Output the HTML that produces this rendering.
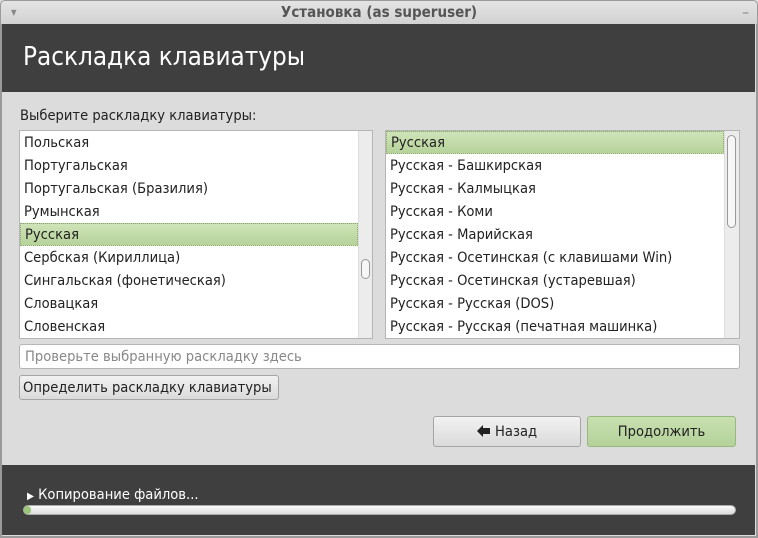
<!DOCTYPE html>
<html><head><meta charset="utf-8"><style>
*{box-sizing:border-box;margin:0;padding:0}
body{width:758px;height:538px;background:#dcdcdc;font-family:"DejaVu Sans Condensed","Liberation Sans",sans-serif;font-size:14.6px;color:#222;position:relative;overflow:hidden;white-space:nowrap}
.a{position:absolute}
.tb{left:0;top:0;width:758px;height:24px;background:linear-gradient(#e4e4e4,#d2d2d2);border:1px solid #9a9a9a;border-bottom:none;border-radius:5px 5px 0 0;text-align:center;font-weight:bold;color:#555;line-height:23px;font-size:15px}
.frame{left:0;top:24px;width:758px;height:514px;border:2px solid #9a9a9a;border-top:none}
.hd{left:2px;top:24px;width:753px;height:68px;background:#3f3f3f;color:#fff;font-size:25.8px;padding-left:21px;line-height:66px}
.list{background:#fff;border:1px solid #b5b5b5;overflow:hidden}
.row{height:23px;line-height:23px;padding-left:4px;white-space:nowrap}
.sel{background:linear-gradient(#cfe3b8,#b6d39a);border:1px dotted #8aa870;line-height:21px}
.sb{background:#ececec;border-left:1px solid #ddd}
.th{border:1px solid #999;border-radius:5px;background:#f6f6f6}
.btn{border:1px solid #a5a5a5;border-radius:3px;background:linear-gradient(#f2f2f2,#dadada);text-align:center}
.bot{left:2px;top:465px;width:753px;height:70px;background:#3f3f3f;color:#fff}
</style></head><body>
<div class="a frame"></div>
<div class="a tb">Установка (as superuser)<span class="a" style="left:10px;top:0;font-size:8px;color:#888">▼</span><span class="a" style="right:8px;top:0;color:#888;font-weight:normal">–</span></div>
<div class="a hd">Раскладка клавиатуры</div>
<div class="a" style="left:20px;top:107px">Выберите раскладку клавиатуры:</div>
<div class="a list" style="left:19px;top:130px;width:354px;height:209px">
<div class="row">Польская</div><div class="row">Португальская</div><div class="row">Португальская (Бразилия)</div><div class="row">Румынская</div><div class="row sel" style="width:338px">Русская</div><div class="row">Сербская (Кириллица)</div><div class="row">Сингальская (фонетическая)</div><div class="row">Словацкая</div><div class="row">Словенская</div>
<div class="a sb" style="left:338px;top:0;width:15px;height:209px"></div>
<div class="a th" style="left:341px;top:128px;width:9px;height:20px"></div>
</div>
<div class="a list" style="left:385px;top:130px;width:355px;height:209px">
<div class="row sel" style="width:338px">Русская</div><div class="row">Русская - Башкирская</div><div class="row">Русская - Калмыцкая</div><div class="row">Русская - Коми</div><div class="row">Русская - Марийская</div><div class="row">Русская - Осетинская (с клавишами Win)</div><div class="row">Русская - Осетинская (устаревшая)</div><div class="row">Русская - Русская (DOS)</div><div class="row">Русская - Русская (печатная машинка)</div>
<div class="a sb" style="left:338px;top:0;width:16px;height:209px"></div>
<div class="a th" style="left:341px;top:4px;width:9px;height:93px"></div>
</div>
<div class="a" style="left:19px;top:344px;width:721px;height:25px;background:#fff;border:1px solid #b5b5b5;border-radius:3px;color:#888;padding-left:5px;line-height:23px">Проверьте выбранную раскладку здесь</div>
<div class="a btn" style="left:19px;top:375px;width:260px;height:25px;line-height:23px;text-align:left;padding-left:3px;overflow:hidden">Определить раскладку клавиатуры</div>
<div class="a btn" style="left:433px;top:416px;width:148px;height:31px;line-height:29px"><svg width="14" height="12" viewBox="0 0 14 12" style="vertical-align:-1px"><path d="M0 6L6 0V3H13V9H6V12Z" fill="#222"/></svg> Назад</div>
<div class="a btn" style="left:587px;top:416px;width:149px;height:31px;line-height:29px;background:linear-gradient(#c8e0b0,#b4d29a);border-color:#97b87e">Продолжить</div>
<div class="a bot">
<div class="a" style="left:25px;top:21px"><span style="font-size:10px">▶</span> Копирование файлов...</div>
<div class="a" style="left:21px;top:40px;width:713px;height:10px;border-radius:5px;background:linear-gradient(#fafafa,#dcdcdc);border:1px solid #aaa"></div>
<div class="a" style="left:22px;top:41px;width:7px;height:8px;border-radius:4px;background:#9cc47a"></div>
</div>
</body></html>
